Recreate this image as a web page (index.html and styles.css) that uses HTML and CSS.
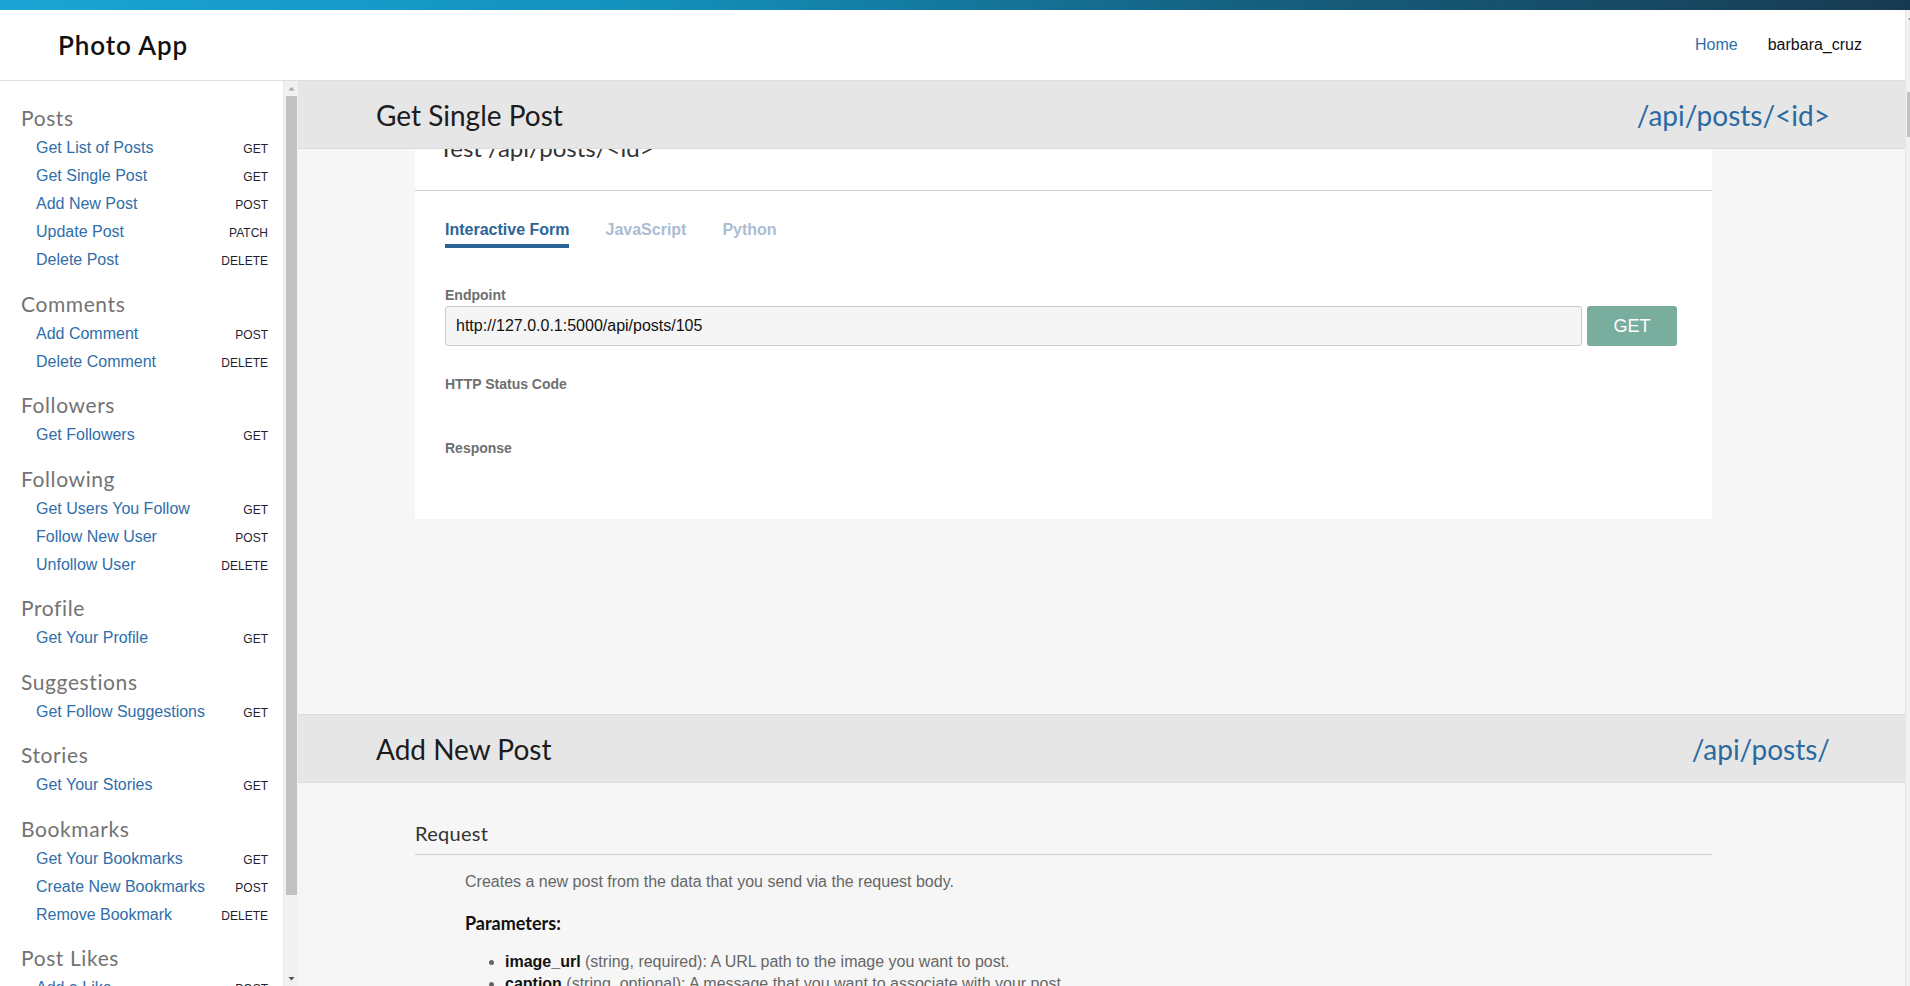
FILE: index.html
```html
<!DOCTYPE html>
<html lang="en">
<head>
<meta charset="utf-8">
<title>Photo App - API Docs</title>
<link rel="stylesheet" href="styles.css">
</head>
<body>
<div class="topbar"></div>
<div class="frame">
  <div class="app" id="app">
    <header class="header">
      <div class="brand">Photo App</div>
      <nav class="nav">
        <a class="nav-link" href="#">Home</a>
        <span class="nav-user">barbara_cruz</span>
      </nav>
    </header>
    <div class="layout">
      <aside class="sidebar">
        <div class="sidebar-nav">
          <div class="group">
            <h3 class="group-title">Posts</h3>
            <a class="item" href="#"><span class="item-name">Get List of Posts</span><span class="method">GET</span></a>
            <a class="item" href="#"><span class="item-name">Get Single Post</span><span class="method">GET</span></a>
            <a class="item" href="#"><span class="item-name">Add New Post</span><span class="method">POST</span></a>
            <a class="item" href="#"><span class="item-name">Update Post</span><span class="method">PATCH</span></a>
            <a class="item" href="#"><span class="item-name">Delete Post</span><span class="method">DELETE</span></a>
          </div>
          <div class="group">
            <h3 class="group-title">Comments</h3>
            <a class="item" href="#"><span class="item-name">Add Comment</span><span class="method">POST</span></a>
            <a class="item" href="#"><span class="item-name">Delete Comment</span><span class="method">DELETE</span></a>
          </div>
          <div class="group">
            <h3 class="group-title">Followers</h3>
            <a class="item" href="#"><span class="item-name">Get Followers</span><span class="method">GET</span></a>
          </div>
          <div class="group">
            <h3 class="group-title">Following</h3>
            <a class="item" href="#"><span class="item-name">Get Users You Follow</span><span class="method">GET</span></a>
            <a class="item" href="#"><span class="item-name">Follow New User</span><span class="method">POST</span></a>
            <a class="item" href="#"><span class="item-name">Unfollow User</span><span class="method">DELETE</span></a>
          </div>
          <div class="group">
            <h3 class="group-title">Profile</h3>
            <a class="item" href="#"><span class="item-name">Get Your Profile</span><span class="method">GET</span></a>
          </div>
          <div class="group">
            <h3 class="group-title">Suggestions</h3>
            <a class="item" href="#"><span class="item-name">Get Follow Suggestions</span><span class="method">GET</span></a>
          </div>
          <div class="group">
            <h3 class="group-title">Stories</h3>
            <a class="item" href="#"><span class="item-name">Get Your Stories</span><span class="method">GET</span></a>
          </div>
          <div class="group">
            <h3 class="group-title">Bookmarks</h3>
            <a class="item" href="#"><span class="item-name">Get Your Bookmarks</span><span class="method">GET</span></a>
            <a class="item" href="#"><span class="item-name">Create New Bookmarks</span><span class="method">POST</span></a>
            <a class="item" href="#"><span class="item-name">Remove Bookmark</span><span class="method">DELETE</span></a>
          </div>
          <div class="group">
            <h3 class="group-title">Post Likes</h3>
            <a class="item" href="#"><span class="item-name">Add a Like</span><span class="method">POST</span></a>
            <a class="item" href="#"><span class="item-name">Remove a Like</span><span class="method">DELETE</span></a>
          </div>
        </div>
        <div class="scrollbar">
          <div class="sb-btn"><svg width="15" height="15" viewBox="0 0 15 15"><path d="M4.5 9.5 L7.5 6 L10.5 9.5 Z" fill="#a3a3a3"/></svg></div>
          <div class="sb-track"><div class="sb-thumb"></div></div>
          <div class="sb-btn"><svg width="15" height="15" viewBox="0 0 15 15"><path d="M4.5 6 L7.5 9.5 L10.5 6 Z" fill="#505050"/></svg></div>
        </div>
      </aside>

      <main class="main">
        <section class="endpoint">
          <div class="section-head">
            <h2 class="section-title">Get Single Post</h2>
            <span class="section-path">/api/posts/&lt;id&gt;</span>
          </div>
          <div class="section-body">
            <div class="card">
              <h3 class="card-title">Test /api/posts/&lt;id&gt;</h3>
              <div class="card-body">
                <div class="tabs">
                  <span class="tab active">Interactive Form</span>
                  <span class="tab">JavaScript</span>
                  <span class="tab">Python</span>
                </div>
                <div class="field-label first">Endpoint</div>
                <div class="endpoint-row">
                  <input class="endpoint-input" type="text" value="http://127.0.0.1:5000/api/posts/105">
                  <button class="send-btn" type="button">GET</button>
                </div>
                <div class="field-label status">HTTP Status Code</div>
                <div class="field-label response">Response</div>
              </div>
            </div>
          </div>
        </section>

        <section class="endpoint">
          <div class="section-head">
            <h2 class="section-title">Add New Post</h2>
            <span class="section-path">/api/posts/</span>
          </div>
          <div class="section-body long">
            <h3 class="sub-head">Request</h3>
            <div class="sub-body">
              <p class="desc">Creates a new post from the data that you send via the request body.</p>
              <h4 class="params-title">Parameters:</h4>
              <ul class="params-list">
                <li><b>image_url</b> (string, required): A URL path to the image you want to post.</li>
                <li><b>caption</b> (string, optional): A message that you want to associate with your post.</li>
                <li><b>alt_text</b> (string, optional): A description of the image for screen readers.</li>
              </ul>
            </div>
          </div>
        </section>
      </main>
    </div>
  </div>
  <div class="page-scroll">
    <div class="ps-btn"><svg width="15" height="15" viewBox="0 0 15 15"><path d="M4.5 9.5 L7.5 6 L10.5 9.5 Z" fill="#505050"/></svg></div>
    <div class="ps-track"><div class="ps-thumb"></div></div>
  </div>
</div>
<script src="script.js"></script>
</body>
</html>
```
FILE: styles.css
```css
* { box-sizing: border-box; }

html, body {
  margin: 0;
  padding: 0;
  height: 100%;
}

body {
  overflow: hidden;
  font-family: "Liberation Sans", Arial, sans-serif;
  background: #fff;
  color: #222;
}

.topbar {
  height: 10px;
  background: linear-gradient(90deg, #1ba4d4 0%, #1392bd 33%, #155f7e 66%, #183a51 100%);
}

.frame {
  display: flex;
  height: 976px;
}

.app {
  flex: 1;
  min-width: 0;
  height: 976px;
  overflow-y: scroll;
  overflow-x: hidden;
  scrollbar-width: none;
  background: #f6f6f6;
}

.app::-webkit-scrollbar { display: none; }

/* fake page scrollbar, mostly cut by the window edge */
.page-scroll {
  flex: none;
  width: 5px;
  overflow: hidden;
  display: flex;
  flex-direction: column;
  background: #f1f1f1;
  border-left: 1px solid #e6e6e6;
}

.ps-btn {
  height: 15px;
  flex: none;
}

.ps-btn svg { display: block; margin-left: -2px; }

.ps-track {
  flex: 1;
}

.ps-thumb {
  margin-top: 67px;
  margin-left: 1px;
  height: 45px;
  background: #c1c1c1;
}

/* Header */
.header {
  position: sticky;
  top: 0;
  z-index: 20;
  height: 71px;
  background: #fff;
  border-bottom: 1px solid #dedede;
  display: flex;
  align-items: center;
  justify-content: space-between;
  padding: 0 43px 0 58px;
}

.brand {
  font-family: "Lato", "Liberation Sans", sans-serif;
  font-weight: 600;
  font-size: 26px;
  letter-spacing: 0.9px;
  color: #111;
}

.nav {
  display: flex;
  gap: 30px;
  font-size: 16px;
}

.nav-link {
  color: #2f6ea9;
  text-decoration: none;
}

.nav-user {
  color: #111;
}

/* Layout */
.layout {
  display: flex;
  align-items: flex-start;
}

.sidebar {
  position: sticky;
  top: 71px;
  flex: none;
  width: 298px;
  height: 905px;
  display: flex;
  background: #fff;
}

.sidebar-nav {
  flex: 1;
  min-width: 0;
  overflow: hidden;
  padding: 21px 15px 40px 21px;
  display: flex;
  flex-direction: column;
  gap: 13.5px;
}

.scrollbar {
  flex: none;
  width: 15px;
  display: flex;
  flex-direction: column;
  background: #f1f1f1;
  border-left: 1px solid #e9e9e9;
}

.sb-btn {
  height: 15px;
  flex: none;
}

.sb-btn svg { display: block; }

.sb-track {
  flex: 1;
}

.sb-thumb {
  height: 799px;
  margin: 0 1px 0 2px;
  background: #c1c1c1;
}

.group {
  display: flex;
  flex-direction: column;
}

.group-title {
  margin: 0;
  font-family: "Lato", "Liberation Sans", sans-serif;
  font-weight: 400;
  font-size: 21px;
  letter-spacing: 0.6px;
  line-height: 32px;
  color: #737373;
}

.item {
  display: flex;
  justify-content: space-between;
  align-items: baseline;
  padding-left: 15px;
  height: 28px;
  line-height: 28px;
  text-decoration: none;
}

.item-name {
  font-size: 16px;
  color: #2f6ea9;
}

.method {
  font-size: 12px;
  line-height: 1;
  color: #1e1f33;
}

/* Main */
.main {
  flex: 1;
  min-width: 0;
}

.section-head {
  position: sticky;
  top: 70px;
  z-index: 10;
  height: 69px;
  background: #e6e6e6;
  border-top: 1px solid #dcdcdc;
  border-bottom: 1px solid #dcdcdc;
  display: flex;
  align-items: center;
  justify-content: space-between;
  padding: 0 75px 0 78px;
}

.section-title {
  margin: 0;
  font-family: "Lato", "Liberation Sans", sans-serif;
  font-weight: 400;
  font-size: 28px;
  color: #1c1c1c;
}

.section-path {
  font-family: "Lato", "Liberation Sans", sans-serif;
  font-size: 28px;
  color: #2a6aa1;
}

.section-body {
  padding: 30px 0 195px 117px;
}

.section-body.long {
  padding: 38px 0 700px 117px;
}

.card {
  max-width: 1297px;
  background: #fff;
}

.card-title {
  margin: 0;
  font-family: "Lato", "Liberation Sans", sans-serif;
  font-weight: 400;
  font-size: 24px;
  line-height: 30px;
  color: #333;
  padding: 24px 24px 27px;
  border-bottom: 1px solid #d0d0d0;
}

.card-body {
  padding: 30px 35px 63px 30px;
}

.tabs {
  display: flex;
  gap: 36px;
}

.tab {
  font-weight: 700;
  font-size: 16px;
  line-height: 18px;
  padding-bottom: 5px;
  border-bottom: 4px solid transparent;
  color: #abbdd1;
}

.tab.active {
  color: #2b6496;
  border-bottom-color: #2b6496;
}

.field-label {
  font-weight: 700;
  font-size: 14px;
  line-height: 16px;
  color: #6f6f6f;
}

.field-label.first { margin-top: 39px; }
.field-label.status { margin-top: 30px; }
.field-label.response { margin-top: 48px; }

.endpoint-row {
  display: flex;
  gap: 5px;
  margin-top: 3px;
}

.endpoint-input {
  flex: 1;
  height: 40px;
  border: 1px solid #cacaca;
  border-radius: 3px;
  background: #f5f5f5;
  padding: 0 10px;
  font-family: "Liberation Sans", Arial, sans-serif;
  font-size: 16px;
  color: #111;
}

.send-btn {
  flex: none;
  width: 90px;
  height: 40px;
  border: none;
  border-radius: 3px;
  background: #79ae9f;
  color: #fff;
  font-family: "Liberation Sans", Arial, sans-serif;
  font-size: 18px;
}

/* Second section */
.sub-head {
  max-width: 1297px;
  margin: 0;
  font-family: "Lato", "Liberation Sans", sans-serif;
  font-weight: 400;
  font-size: 20px;
  line-height: 24px;
  letter-spacing: 0.3px;
  color: #333;
  padding-bottom: 9px;
  border-bottom: 1px solid #cfcfcf;
}

.sub-body {
  padding-left: 50px;
}

.desc {
  margin: 17px 0 0;
  font-size: 16px;
  line-height: 20px;
  color: #666;
}

.params-title {
  margin: 20px 0 0;
  font-family: "Lato", "Liberation Sans", sans-serif;
  font-weight: 700;
  font-size: 18px;
  line-height: 22px;
  color: #111;
}

.params-list {
  margin: 17px 0 0;
  padding-left: 40px;
  font-size: 16px;
  line-height: 22px;
  color: #666;
}

.params-list b {
  color: #111;
}
```
FILE: script.js
```js
document.getElementById('app').scrollTop = 71;
```
